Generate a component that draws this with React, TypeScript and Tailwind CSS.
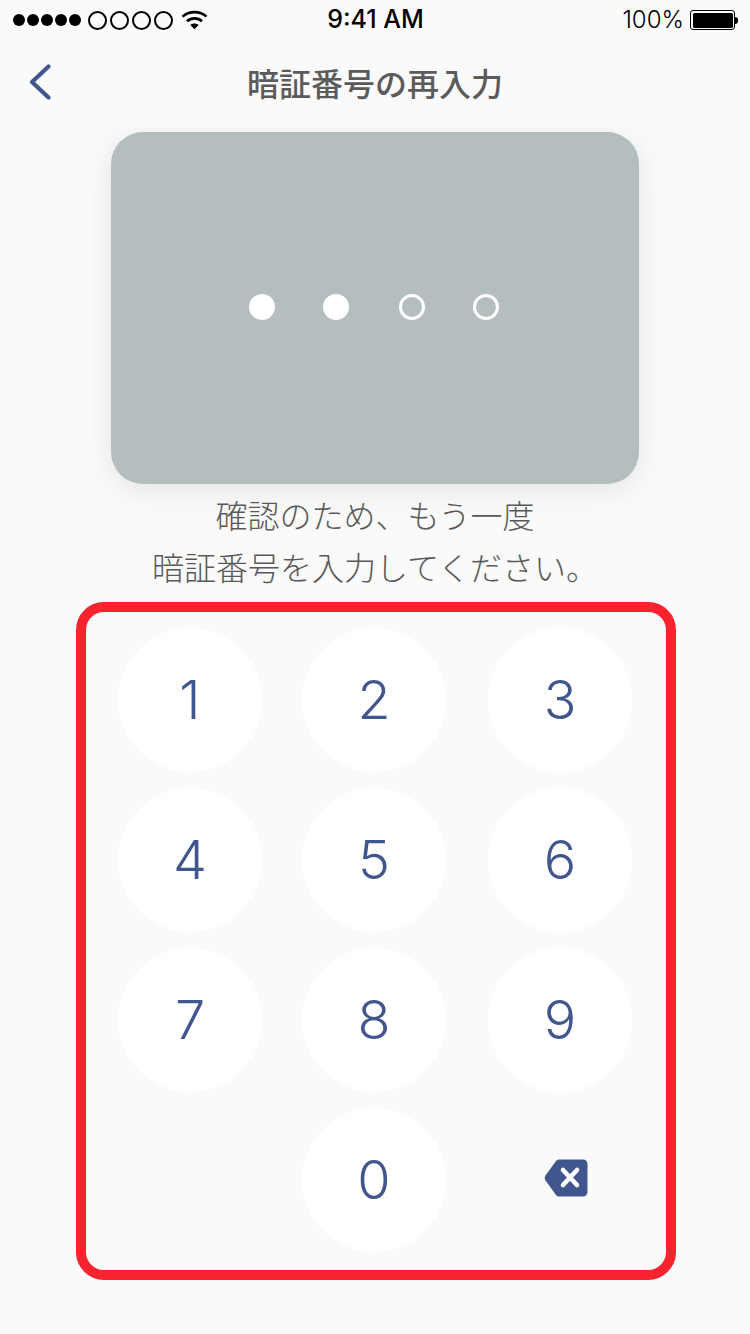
const jp = 'font-["Noto_Sans_CJK_JP","Noto_Sans",sans-serif]';
const keys = ['1', '2', '3', '4', '5', '6', '7', '8', '9'];

function Wifi() {
  return (
    <svg width="27" height="20" viewBox="0 0 27 20" fill="none" stroke="#000" strokeWidth="2.6">
      <path d="M1.5 6.6C8.2 0.6 18.8 0.6 25.5 6.6" />
      <path d="M6 11.2C10.2 7.4 16.8 7.4 21 11.2" />
      <path d="M13.5 19.2L9.4 15C11.6 13 15.4 13 17.6 15Z" fill="#000" stroke="none" />
    </svg>
  );
}

function StatusBar() {
  return (
    <div className="grid h-10 grid-cols-[1fr_auto_1fr] items-center pl-[13px] pr-[12px] font-['Inter',sans-serif] text-[24px] text-black">
      <div className="flex items-center">
        <div className="flex gap-[2px]">
          {[0, 1, 2, 3, 4].map((i) => (
            <span key={i} className="h-3 w-3 rounded-full bg-black" />
          ))}
        </div>
        <div className="ml-[7px] flex gap-[3px]">
          {[0, 1, 2, 3].map((i) => (
            <span key={i} className="h-[19px] w-[19px] rounded-full border-2 border-black" />
          ))}
        </div>
        <span className="ml-2 flex">
          <Wifi />
        </span>
      </div>
      <span className="text-[25px] font-medium">9:41 AM</span>
      <div className="flex items-center justify-end gap-[6px]">
        <span className="font-light">100%</span>
        <div className="flex items-center">
          <div className="h-[20px] w-[45px] rounded-[3px] border border-black p-[1.5px]">
            <div className="h-full w-full rounded-[1.5px] bg-black" />
          </div>
          <span className="h-[7px] w-[3px] rounded-r-sm bg-black" />
        </div>
      </div>
    </div>
  );
}

function DeleteIcon() {
  return (
    <svg width="44" height="38" viewBox="0 0 44 38" fill="none">
      <path
        d="M15.5 0.5H39C41.5 0.5 43.5 2.5 43.5 5V33C43.5 35.5 41.5 37.5 39 37.5H15.5C14 37.5 13 37 12 36L1.5 21.5C0.5 20 0.5 18 1.5 16.5L12 2C13 1 14 0.5 15.5 0.5Z"
        fill="#41568c"
      />
      <path d="M19 11L33 26M33 11L19 26" stroke="#fff" strokeWidth="4.6" strokeLinecap="round" />
    </svg>
  );
}

function Key({ label }: { label: string }) {
  return (
    <button className="flex h-36 w-36 items-center justify-center rounded-full bg-white pb-[2px] font-['Inter',sans-serif] text-[54px] font-light text-[#41568c]">
      {label}
    </button>
  );
}

export default function App() {
  return (
    <div className={`flex h-[1334px] w-[750px] flex-col overflow-hidden bg-[#fafafa] ${jp}`}>
      <div className="relative z-10 bg-[#fafafa]">
        <StatusBar />
        <div className="relative flex h-[88px] items-center justify-center">
          <svg className="absolute left-[26px] top-[21px]" width="28" height="42" viewBox="0 0 28 42" fill="none">
            <path d="M22.5 5.5L6 21L22.5 36.5" stroke="#41568c" strokeWidth="4.2" strokeLinecap="round" strokeLinejoin="round" />
          </svg>
          <h1 className="pb-1 text-[32px] font-medium text-[#5b5b5b]">暗証番号の再入力</h1>
        </div>
      </div>

      <div className="mt-1 flex h-[352px] w-[528px] items-center justify-center self-center rounded-[32px] bg-[#b5bebe] pb-[2px] pr-[2px] shadow-[0_6px_30px_rgba(0,0,0,0.09)]">
        <span className="h-[26px] w-[26px] rounded-full bg-white" />
        <span className="ml-[48px] h-[26px] w-[26px] rounded-full bg-white" />
        <span className="ml-[50px] h-[26px] w-[26px] rounded-full border-[3px] border-white" />
        <span className="ml-[48px] h-[26px] w-[26px] rounded-full border-[3px] border-white" />
      </div>

      <p className="mt-1 text-center text-[32px] leading-[52px] font-light text-[#595959]">
        確認のため、もう一度
        <br />
        暗証番号を入力してください。
      </p>

      <div className="mt-[10px] ml-[76px] h-[678px] w-[600px] rounded-[28px] border-[10px] border-[#f9222f] pl-[32px] pt-[16px]">
        <div className="grid grid-cols-[184px_186px_144px] gap-y-4">
          {keys.map((k) => (
            <Key key={k} label={k} />
          ))}
          <div />
          <Key label="0" />
          <div className="flex h-36 w-36 items-center justify-center pb-1 pl-3">
            <DeleteIcon />
          </div>
        </div>
      </div>
    </div>
  );
}
